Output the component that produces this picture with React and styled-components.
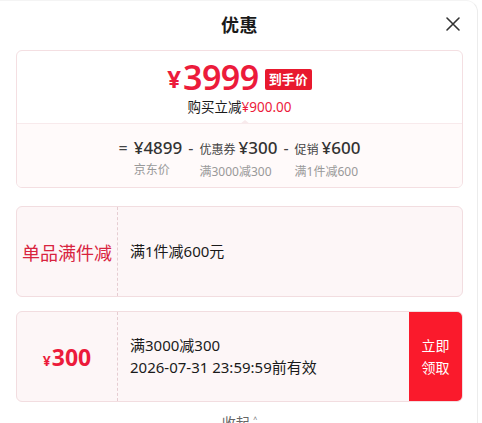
import styled, { createGlobalStyle } from "styled-components";

const GlobalStyle = createGlobalStyle`
  body {
    margin: 0;
    background: #fff;
    font-family: "Noto Sans", "Noto Sans CJK SC", sans-serif;
    color: #1a1a1a;
  }
`;

const RED = "#ec1b3b";

function CloseIcon() {
  return (
    <svg width="16" height="16" viewBox="0 0 16 16">
      <path d="M2 2 L14 14 M14 2 L2 14" stroke="#333" strokeWidth="1.6" strokeLinecap="round" />
    </svg>
  );
}

function Part({ price, label, sub }) {
  return (
    <PartCol>
      <PartTop>
        {label && <small>{label}</small>}
        <b>¥{price}</b>
      </PartTop>
      <PartSub>{sub}</PartSub>
    </PartCol>
  );
}

export default function App() {
  return (
    <>
      <GlobalStyle />
      <Sheet>
        <Header>
          <span />
          <Title>优惠</Title>
          <CloseBtn>
            <CloseIcon />
          </CloseBtn>
        </Header>

        <SummaryCard>
          <FinalPrice>
            <PriceLine>
              <Yen>¥</Yen>
              <Big>3999</Big>
              <Tag>到手价</Tag>
            </PriceLine>
            <Saved>
              购买立减<em>¥900.00</em>
            </Saved>
          </FinalPrice>
          <Breakdown>
            <Op>=</Op>
            <Part price="4899" sub="京东价" />
            <Op>-</Op>
            <Part price="300" label="优惠券" sub="满3000减300" />
            <Op>-</Op>
            <Part price="600" label="促销" sub="满1件减600" />
          </Breakdown>
        </SummaryCard>

        <PromoCard>
          <PromoLeft>
            <PromoName>单品满件减</PromoName>
          </PromoLeft>
          <PromoBody>
            <Line>满1件减600元</Line>
          </PromoBody>
        </PromoCard>

        <PromoCard $gap={14}>
          <PromoLeft>
            <CouponValue>
              <small>¥</small>300
            </CouponValue>
          </PromoLeft>
          <PromoBody>
            <Line>满3000减300</Line>
            <Line>2026-07-31 23:59:59前有效</Line>
          </PromoBody>
          <GetBtn>
            立即
            <br />
            领取
          </GetBtn>
        </PromoCard>

        <Collapse>收起 ˄</Collapse>
      </Sheet>
    </>
  );
}

const Sheet = styled.div`
  width: 478px;
  height: 423px;
  box-sizing: border-box;
  padding: 0 14px 0 16px;
  border-right: 1px solid #ececec;
  border-top: 1px solid #f4f4f4;
  border-top-right-radius: 12px;
  overflow: hidden;
`;

const Header = styled.div`
  height: 48px;
  display: grid;
  grid-template-columns: 1fr auto 1fr;
  align-items: center;
  margin-top: -1px;
`;

const Title = styled.h1`
  margin: 0;
  font-size: 18px;
  font-weight: 700;
  color: #1a1a1a;
  letter-spacing: 0.5px;
`;

const CloseBtn = styled.div`
  justify-self: end;
  display: flex;
  margin-right: 2px;
`;

const SummaryCard = styled.div`
  margin-top: 2px;
  border: 1px solid #f4dfe2;
  border-radius: 6px;
  overflow: hidden;
`;

const FinalPrice = styled.div`
  height: 73px;
  display: flex;
  flex-direction: column;
  align-items: center;
  padding-top: 7px;
  box-sizing: border-box;
  border-bottom: 1px solid #f8eaec;
  position: relative;
  &:after {
    content: "";
    position: absolute;
    left: 223px;
    bottom: -1px;
    width: 0;
    height: 0;
    border-left: 5px solid transparent;
    border-right: 5px solid transparent;
    border-bottom: 4px solid #f8eaec;
  }
`;

const PriceLine = styled.div`
  display: flex;
  align-items: center;
  color: ${RED};
  height: 38px;
  line-height: 1;
`;

const Yen = styled.span`
  font-size: 24px;
  font-weight: 700;
  margin-right: 2px;
  margin-top: 4px;
`;

const Big = styled.span`
  font-size: 34px;
  font-weight: 600;
  letter-spacing: -0.5px;
`;

const Tag = styled.span`
  margin-left: 6px;
  margin-top: 4px;
  background: #e8192e;
  color: #fff;
  font-size: 13px;
  font-weight: 700;
  padding: 1px 4px;
  border-radius: 2px;
  line-height: 19px;
`;

const Saved = styled.div`
  font-size: 13.5px;
  line-height: 22px;
  color: #1a1a1a;
  em {
    font-style: normal;
    color: ${RED};
  }
`;

const Breakdown = styled.div`
  height: 63px;
  background: #fffafa;
  display: flex;
  justify-content: center;
  align-items: flex-start;
  padding-top: 11px;
  box-sizing: border-box;
  gap: 6px;
`;

const Op = styled.span`
  font-size: 16px;
  color: #444;
  line-height: 26px;
`;

const PartCol = styled.div`
  display: flex;
  flex-direction: column;
`;

const PartTop = styled.div`
  display: flex;
  align-items: baseline;
  gap: 3px;
  line-height: 26px;
  color: #333;
  small {
    font-size: 12px;
    color: #444;
  }
  b {
    font-size: 17px;
    font-weight: 500;
  }
`;

const PartSub = styled.div`
  font-size: 12px;
  color: #999;
  line-height: 18px;
`;

const PromoCard = styled.div`
  margin-top: ${(p) => (p.$gap ? p.$gap : 18)}px;
  height: 91px;
  box-sizing: border-box;
  display: flex;
  background: #fdf6f7;
  border: 1px solid #f2dde0;
  border-radius: 6px;
  overflow: hidden;
`;

const PromoLeft = styled.div`
  width: 100px;
  flex-shrink: 0;
  display: flex;
  align-items: center;
  justify-content: center;
  border-right: 1px dashed #e6cdd2;
`;

const PromoName = styled.span`
  font-size: 18px;
  color: #d8243f;
`;

const CouponValue = styled.span`
  color: ${RED};
  font-size: 23px;
  font-weight: 700;
  small {
    font-size: 14px;
    margin-right: 1px;
  }
`;

const PromoBody = styled.div`
  flex: 1;
  display: flex;
  flex-direction: column;
  justify-content: center;
  padding-left: 12px;
  gap: 1px;
`;

const Line = styled.div`
  font-size: 15px;
  color: #1a1a1a;
  line-height: 21px;
`;

const GetBtn = styled.div`
  width: 53px;
  flex-shrink: 0;
  background: #fa1a2c;
  color: #fff;
  font-size: 14px;
  line-height: 22px;
  display: flex;
  align-items: center;
  justify-content: center;
  text-align: center;
`;

const Collapse = styled.div`
  margin-top: 10px;
  text-align: center;
  font-size: 14px;
  color: #666;
`;
